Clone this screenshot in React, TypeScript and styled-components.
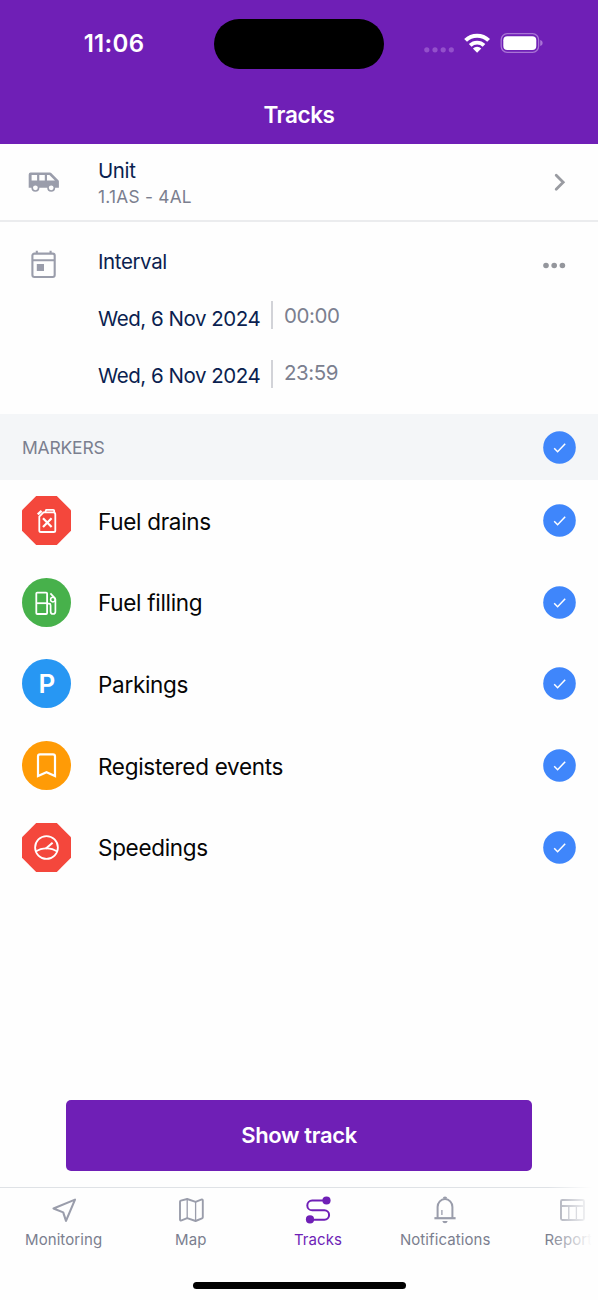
import React from "react";
import styled, { createGlobalStyle } from "styled-components";

const PURPLE = "#6f1fb6";
const NAVY = "#0b1f50";
const GREY = "#7b7f8f";
const ICON_GREY = "#9a9dab";

const Global = createGlobalStyle`
  * { box-sizing: border-box; }
  body { margin: 0; background: #fff; }
`;

const Screen = styled.div`
  width: 598px;
  height: 1300px;
  display: flex;
  flex-direction: column;
  overflow: hidden;
  background: #fefefe;
  font-family: Inter, "Liberation Sans", sans-serif;
`;

const Header = styled.header`
  height: 144px;
  flex: none;
  background: ${PURPLE};
  color: #fff;
`;

const StatusBar = styled.div`
  height: 87px;
  display: grid;
  grid-template-columns: 214px 170px 214px;
  align-items: center;
`;

const Clock = styled.div`
  padding: 0 0 0 14px;
  text-align: center;
  font-size: 24px;
  font-weight: 600;
  letter-spacing: 0.3px;
`;

const Island = styled.div`
  height: 50px;
  border-radius: 25px;
  background: #000;
`;

const StatusIcons = styled.svg`
  display: block;
  width: 130px;
  height: 30px;
  margin-left: 36px;
`;

const Title = styled.h1`
  margin: 0;
  padding-top: 14px;
  text-align: center;
  font-size: 22.5px;
  line-height: 28px;
  font-weight: 600;
  letter-spacing: -0.4px;
`;

const UnitRow = styled.div`
  height: 78px;
  flex: none;
  display: grid;
  grid-template-columns: 98px 1fr auto;
  align-items: center;
  padding-right: 31px;
  border-bottom: 2px solid #ebecee;
`;

const UnitText = styled.div`
  padding-top: 2px;
`;

const LeadIcon = styled.div`
  display: flex;
  align-items: flex-start;
  padding-left: 27px;
`;

const Label = styled.div`
  font-size: 20.5px;
  line-height: 26px;
  letter-spacing: -0.4px;
  color: ${NAVY};
`;

const UnitName = styled.div`
  font-size: 17.3px;
  line-height: 25px;
  letter-spacing: 0.25px;
  color: ${GREY};
`;

const Interval = styled.section`
  height: 192px;
  flex: none;
  display: grid;
  grid-template-columns: 98px 1fr auto;
  padding: 27px 31px 0 0;
`;

const DateRow = styled.div<{ $top: number }>`
  display: flex;
  align-items: flex-start;
  height: 28px;
  margin-top: ${(p) => p.$top}px;
`;

const DateText = styled.span<{ $drop: number }>`
  width: 173px;
  padding-top: ${(p) => p.$drop}px;
  font-size: 20.5px;
  line-height: 26px;
  letter-spacing: -0.47px;
  white-space: nowrap;
  color: ${NAVY};
`;

const TimeText = styled.span`
  height: 28px;
  padding-left: 11px;
  border-left: 2px solid #d2d3d8;
  font-size: 20.5px;
  letter-spacing: -0.45px;
  color: ${GREY};
`;

const TimeValue = styled.span<{ $shift: number }>`
  display: block;
  margin-top: ${(p) => p.$shift}px;
  line-height: 26px;
`;

const MarkersBar = styled.div`
  height: 66px;
  flex: none;
  display: flex;
  align-items: center;
  justify-content: space-between;
  padding: 0 22px;
  background: #f4f6f8;
  font-size: 17.5px;
  letter-spacing: -0.2px;
  color: ${GREY};
`;

const MarkerRow = styled.div`
  height: 81.6px;
  flex: none;
  display: grid;
  grid-template-columns: 76px 1fr auto;
  align-items: center;
  padding: 0 22px;
`;

const MarkerName = styled.span`
  padding-top: 2px;
  font-size: 22.5px;
  line-height: 30px;
  letter-spacing: -0.3px;
  color: #060606;
`;

const Glyph = styled.svg`
  display: block;
`;

const Spacer = styled.div`
  flex: 1;
`;

const ShowButton = styled.button`
  flex: none;
  width: 466px;
  height: 71px;
  margin: 0 auto 16px;
  padding: 0 0 2px;
  border: 0;
  border-radius: 5px;
  background: ${PURPLE};
  color: #fff;
  font: 600 22px Inter, sans-serif;
  letter-spacing: -0.35px;
`;

const TabBar = styled.nav`
  position: relative;
  height: 82px;
  flex: none;
  display: flex;
  border-top: 1px solid #dfe2e6;
`;

const Tab = styled.div<{ $active?: boolean }>`
  width: 127.2px;
  flex: none;
  display: flex;
  flex-direction: column;
  align-items: center;
  padding-top: 8px;
  font-size: 15px;
  line-height: 20px;
  letter-spacing: 0.08px;
  color: ${(p) => (p.$active ? PURPLE : GREY)};
  svg { margin: 0 0 6px; }
`;

const Fade = styled.div`
  position: absolute;
  top: -1px;
  right: 0;
  width: 50px;
  height: 70px;
  background: linear-gradient(to right, rgba(254, 254, 254, 0), #fefefe 88%);
`;

const HomeArea = styled.div`
  height: 31px;
  flex: none;
  display: flex;
  justify-content: center;
  padding-top: 13px;
`;

const HomeIndicator = styled.div`
  width: 213px;
  height: 7px;
  border-radius: 4px;
  background: #000;
`;

const VanIcon = () => (
  <Glyph width="33" height="24" viewBox="0 0 33 24" fill={ICON_GREY}>
    <path
      fillRule="evenodd"
      d="M3.700 2.500h19.300q.7 0 1.200.5l7.200 7.200q.5.5.5 1.200v6.400H1.700V4.500q0-2 2-2zM4.600 4.900v5.500h5.500V4.900zM12.300 4.900v5.500h5.500V4.900zM20 4.900v5.500h7.900l-5.500-5.500z"
    />
    <circle cx="8.400" cy="17.800" r="3.200" fill="#fefefe" stroke={ICON_GREY} strokeWidth="1.600" />
    <circle cx="24.200" cy="17.800" r="3.200" fill="#fefefe" stroke={ICON_GREY} strokeWidth="1.600" />
  </Glyph>
);

const CalendarIcon = () => (
  <Glyph width="33" height="33" viewBox="0 0 33 33" fill="none" stroke={ICON_GREY} strokeWidth="2.100">
    <rect x="5.400" y="4.600" width="22.300" height="23.400" rx="2" />
    <path d="M5.400 11.200h22.300M9.800 1.700v3M23.600 1.700v3" />
    <rect x="9.800" y="15" width="7.200" height="7" fill={ICON_GREY} stroke="none" />
  </Glyph>
);

const Check = () => (
  <Glyph width="33" height="33" viewBox="0 0 33 33" fill="none">
    <circle cx="16.5" cy="16.5" r="16.3" fill="#3f86fb" />
    <path d="M11.200 17.200l3.400 3.500 7.600-8" stroke="#fff" strokeWidth="1.500" />
  </Glyph>
);

const Octagon = ({ children }: { children: React.ReactNode }) => (
  <Glyph width="49" height="49" viewBox="0 0 49 49" fill="none" stroke="#fff" strokeWidth="1.8">
    <path d="M14.2 0h20.6L49 14.2v20.6L34.8 49H14.2L0 34.8V14.2z" fill="#f4473c" stroke="none" />
    {children}
  </Glyph>
);

const Disc = ({ color, children }: { color: string; children: React.ReactNode }) => (
  <Glyph width="49" height="49" viewBox="0 0 49 49" fill="none" stroke="#fff" strokeWidth="1.8">
    <circle cx="24.5" cy="24.5" r="24.5" fill={color} stroke="none" />
    {children}
  </Glyph>
);

const markers = [
  {
    name: "Fuel drains",
    icon: (
      <Octagon>
        <path d="M17.300 20.600l4.200-4.200h9.800q2 0 2 2v16q0 1.600-1.600 1.600H18.900q-1.600 0-1.600-1.600z" />
        <path d="M23.200 16.200l1-2.400h7q1 0 1 1v1.600" />
        <path d="M15.800 18.400l3.800-3.600" strokeWidth="2.400" />
        <path d="M21 22.200l8.600 8.800M29.600 22.200L21 31" strokeWidth="2.200" />
      </Octagon>
    ),
  },
  {
    name: "Fuel filling",
    icon: (
      <Disc color="#47b14b">
        <rect x="14.300" y="14.600" width="10.800" height="21.400" rx="1" />
        <path d="M14.600 25.200h10.600" />
        <path d="M25.600 25.600h1.400q1.600 0 1.600 1.600v6.200q0 2.600 2.400 2.600t2.400-2.600V21.600q0-1-.8-1.800l-4.200-4.400" strokeWidth="1.700" />
        <circle cx="30.900" cy="21.600" r="2.300" strokeWidth="1.500" />
      </Disc>
    ),
  },
  {
    name: "Parkings",
    icon: (
      <Disc color="#2797f3">
        <text x="25" y="34" textAnchor="middle" fontSize="26" fontWeight="600" fill="#fff" stroke="none">P</text>
      </Disc>
    ),
  },
  {
    name: "Registered events",
    icon: (
      <Disc color="#ff9b06">
        <path d="M16 35V15.400q0-2 2-2h13q2 0 2 2V35l-8.500-3.700z" strokeWidth="2.200" />
      </Disc>
    ),
  },
  {
    name: "Speedings",
    icon: (
      <Octagon>
        <circle cx="24.500" cy="24.500" r="11.400" />
        <path d="M13.800 28.600q4.500-3.200 10.700-3.200t10.700 3.200" />
        <path d="M23.600 25.800l7-6" strokeWidth="2" />
      </Octagon>
    ),
  },
];

const tabs = [
  {
    name: "Monitoring",
    icon: <path d="M3.500 12.500L25 3.600 16 24.800l-2.800-8.400z" strokeWidth="2.100" />,
  },
  {
    name: "Map",
    icon: (
      <>
        <path d="M3 5.800Q3 5 3.800 4.700L10.200 3l8.400 2.800 5.600-2.200q1.600-.4 1.600 1v16.600q0 .8-.8 1.100L18.600 25l-8.400-2.800-5.600 2.200Q3 24.800 3 23.400z" strokeWidth="1.900" />
        <path d="M10.200 3v19.200M18.600 5.800V25" strokeWidth="1.300" />
      </>
    ),
  },
  {
    name: "Tracks",
    active: true,
    icon: (
      <>
        <path d="M22.500 4.500H8.200a4.900 4.900 0 0 0 0 9.800h12.200a4.700 4.700 0 0 1 0 9.400H6" strokeWidth="2" />
        <circle cx="22.500" cy="4.500" r="4.100" fill={PURPLE} stroke="none" />
        <circle cx="6" cy="23.400" r="4.100" fill={PURPLE} stroke="none" />
      </>
    ),
  },
  {
    name: "Notifications",
    icon: (
      <>
        <path d="M6.600 22V11a7.400 7.900 0 0 1 14.800 0v11" strokeWidth="2" />
        <path d="M3.400 22.200h21.200" strokeWidth="2.200" />
        <path d="M10.900 14v5" strokeWidth="1.300" />
        <path d="M11.800 2.600a2.200 2.200 0 0 1 4.400 0zM11.300 24.900h5.400q-.5 2.400-2.700 2.400t-2.700-2.400z" fill={ICON_GREY} stroke="none" />
      </>
    ),
  },
  {
    name: "Reports",
    icon: (
      <>
        <rect x="3" y="4" width="23" height="20" rx="1.500" strokeWidth="1.900" />
        <path d="M3 10h23" strokeWidth="1.900" />
        <path d="M10.800 10v14M18.400 10v14" strokeWidth="1.300" />
      </>
    ),
  },
];

export default function App() {
  return (
    <Screen>
      <Global />
      <Header>
        <StatusBar>
          <Clock>11:06</Clock>
          <Island />
          <StatusIcons viewBox="420 29 130 30" fill="none">
            <g fill="#9350cb">
              <circle cx="426.800" cy="49.800" r="2.600" />
              <circle cx="435" cy="49.800" r="2.600" />
              <circle cx="443.200" cy="49.800" r="2.600" />
              <circle cx="451.300" cy="49.800" r="2.600" />
            </g>
            <g stroke="#fff" strokeWidth="4">
              <path d="M465.600 40.400a16.300 16.300 0 0 1 23 0" />
              <path d="M470.200 45.400a9.800 9.800 0 0 1 13.800 0" strokeWidth="3.800" />
            </g>
            <path d="M472.900 48.500a6 6 0 0 1 8.400 0L477.100 52.700z" fill="#fff" />
            <rect x="501.200" y="33.700" width="37.400" height="18.600" rx="6" stroke="#a974d5" strokeWidth="1.300" />
            <rect x="503.300" y="36.200" width="33" height="13.800" rx="4" fill="#fff" />
            <path d="M540.200 40v6q2.500-.7 2.500-3t-2.500-3z" fill="#a974d5" />
          </StatusIcons>
        </StatusBar>
        <Title>Tracks</Title>
      </Header>

      <UnitRow>
        <LeadIcon><VanIcon /></LeadIcon>
        <UnitText>
          <Label>Unit</Label>
          <UnitName>1.1AS - 4AL</UnitName>
        </UnitText>
        <Glyph width="14" height="20" viewBox="0 0 14 20" fill="none">
          <path d="M3.200 3.300l7 7-7 7" stroke="#999ba1" strokeWidth="2.800" strokeLinecap="round" />
        </Glyph>
      </UnitRow>

      <Interval>
        <LeadIcon><CalendarIcon /></LeadIcon>
        <div>
          <Label>Interval</Label>
          <DateRow $top={26}>
            <DateText $drop={5}>Wed, 6 Nov 2024</DateText>
            <TimeText><TimeValue $shift={2}>00:00</TimeValue></TimeText>
          </DateRow>
          <DateRow $top={31}>
            <DateText $drop={3}>Wed, 6 Nov 2024</DateText>
            <TimeText><TimeValue $shift={0}>23:59</TimeValue></TimeText>
          </DateRow>
        </div>
        <Glyph width="26" height="36" viewBox="0 0 26 36" fill="#94969c">
          <circle cx="5" cy="16.500" r="2.800" />
          <circle cx="13.200" cy="16.500" r="2.800" />
          <circle cx="21.400" cy="16.500" r="2.800" />
        </Glyph>
      </Interval>

      <MarkersBar>
        <span>MARKERS</span>
        <Check />
      </MarkersBar>
      {markers.map((m) => (
        <MarkerRow key={m.name}>
          {m.icon}
          <MarkerName>{m.name}</MarkerName>
          <Check />
        </MarkerRow>
      ))}

      <Spacer />
      <ShowButton>Show track</ShowButton>
      <TabBar>
        {tabs.map((t) => (
          <Tab key={t.name} $active={t.active}>
            <Glyph width="28" height="28" viewBox="0 0 28 28" fill="none" stroke={t.active ? PURPLE : ICON_GREY} strokeLinejoin="round">
              {t.icon}
            </Glyph>
            {t.name}
          </Tab>
        ))}
        <Fade />
      </TabBar>
      <HomeArea><HomeIndicator /></HomeArea>
    </Screen>
  );
}
